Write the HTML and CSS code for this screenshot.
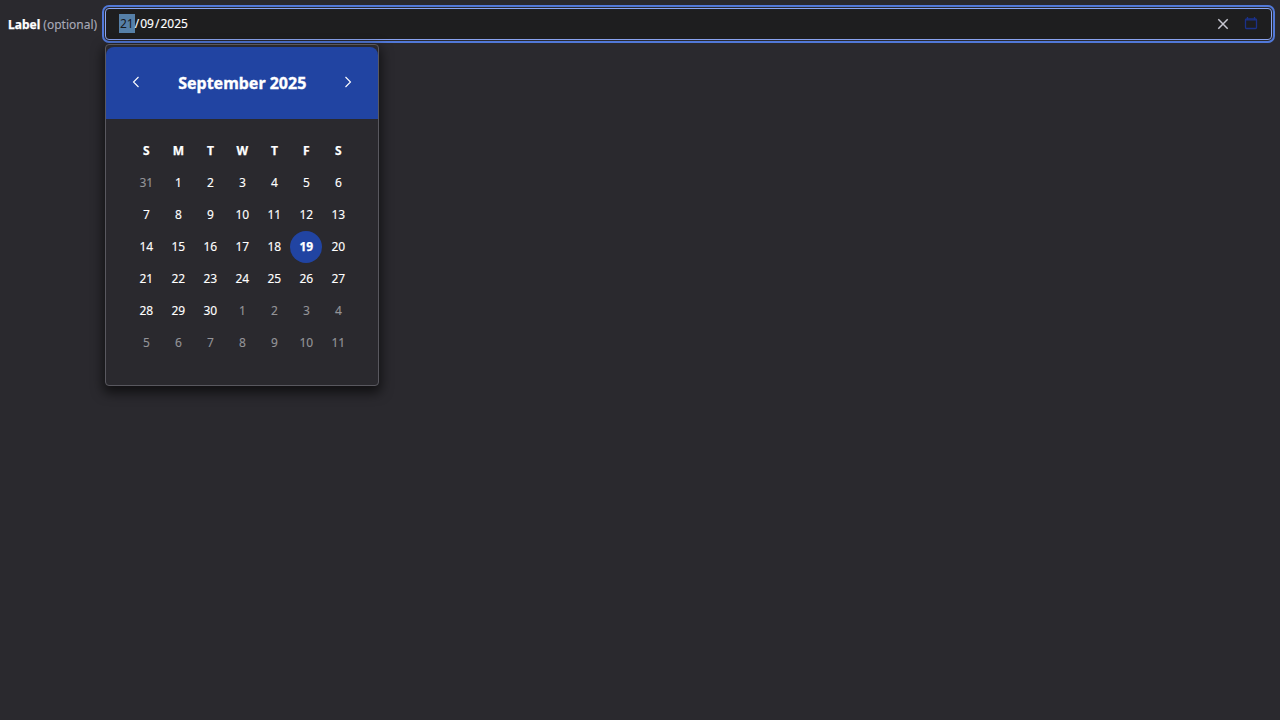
FILE: index.html
```html
<!DOCTYPE html>
<html lang="en">
<head>
<meta charset="utf-8">
<title>Date input</title>
<link rel="stylesheet" href="styles.css">
</head>
<body>
<div class="field">
  <label class="label"><b>Label</b> <span>(optional)</span></label>
  <div class="control">
    <div class="input">
      <div class="value"><span class="part selected">21</span>/<span class="part">09</span>/<span class="part">2025</span></div>
      <svg class="clear" viewBox="0 0 16 16"><path d="M3.3 3.3l9.4 9.4m0-9.4l-9.4 9.4"/></svg>
      <svg class="calendar-icon" viewBox="0 0 16 16"><rect x="2.5" y="2.8" width="11" height="9.7" rx="1"/><path d="M2.5 3.8h11M4.5 1v2.5M11.5 1v2.5"/></svg>
    </div>
    <div class="popup">
      <div class="header">
        <svg viewBox="0 0 16 16"><path d="M10.5 3L5.5 8l5 5"/></svg>
        <h2>September 2025</h2>
        <svg viewBox="0 0 16 16"><path d="M5.5 3l5 5-5 5"/></svg>
      </div>
      <div class="grid">
        <b>S</b><b>M</b><b>T</b><b>W</b><b>T</b><b>F</b><b>S</b>
        <span class="muted">31</span><span>1</span><span>2</span><span>3</span><span>4</span><span>5</span><span>6</span>
        <span>7</span><span>8</span><span>9</span><span>10</span><span>11</span><span>12</span><span>13</span>
        <span>14</span><span>15</span><span>16</span><span>17</span><span>18</span><span class="today">19</span><span>20</span>
        <span>21</span><span>22</span><span>23</span><span>24</span><span>25</span><span>26</span><span>27</span>
        <span>28</span><span>29</span><span>30</span><span class="muted">1</span><span class="muted">2</span><span class="muted">3</span><span class="muted">4</span>
        <span class="muted">5</span><span class="muted">6</span><span class="muted">7</span><span class="muted">8</span><span class="muted">9</span><span class="muted">10</span><span class="muted">11</span>
      </div>
    </div>
  </div>
</div>
</body>
</html>
```
FILE: styles.css
```css
* { box-sizing: border-box; }
body { margin: 0; padding: 8px; min-height: 100vh; background: #2a292e; color: #fff; font: 12px/16px "Noto Sans", sans-serif; -webkit-text-stroke: .12px; }
.field { display: flex; gap: 8px; align-items: flex-start; }
.label { padding-top: 9px; width: 89px; white-space: nowrap; }
.label b { -webkit-text-stroke: .25px; }
.label span { color: #a9aab8; }
.control { position: relative; flex: 1; }
.input { display: flex; align-items: center; height: 32px; padding: 0 12px 0 13px; border: 1px solid #89a3ee; border-radius: 4px; background: #1e1e1f; outline: 2px solid #5178d8; outline-offset: 1px; }
.value { flex: 1; display: flex; margin-bottom: 1px; line-height: 17px; }
.part { padding: 1px; margin: -1px 0; }
.selected { background: #5680a8; color: #17191d; -webkit-text-stroke: 0; }
.clear, .calendar-icon { width: 16px; height: 16px; fill: none; stroke: #c6c6d0; stroke-width: 1.5; }
.calendar-icon { margin-left: 12px; stroke: #1b3188; stroke-width: 1.3; }
.popup { position: absolute; left: 0; top: 36px; width: 274px; height: 342px; padding-top: 2px; border: 1px solid #59585f; border-radius: 4px; background: #2a292e; box-shadow: 0 5px 12px 2px #0009; overflow: hidden; }
.header { display: flex; align-items: center; justify-content: space-between; height: 72px; padding: 0 22px; border-radius: 8px 8px 0 0; background: #2144a2; }
.header h2 { margin: 0; font-size: 16px; line-height: 24px; text-indent: .5px; -webkit-text-stroke: .35px; }
.header svg { width: 16px; height: 16px; margin-bottom: 2px; fill: none; stroke: #fff; stroke-width: 1.1; }
.grid { display: grid; grid-template-columns: repeat(7, 32px); grid-auto-rows: 32px; padding: 16px 24px; text-align: center; text-indent: .7px; line-height: 32px; }
.grid b, .today { -webkit-text-stroke: .25px; }
.muted { color: #949498; }
.today { border-radius: 50%; background: #2144a2; font-weight: 700; }
```
